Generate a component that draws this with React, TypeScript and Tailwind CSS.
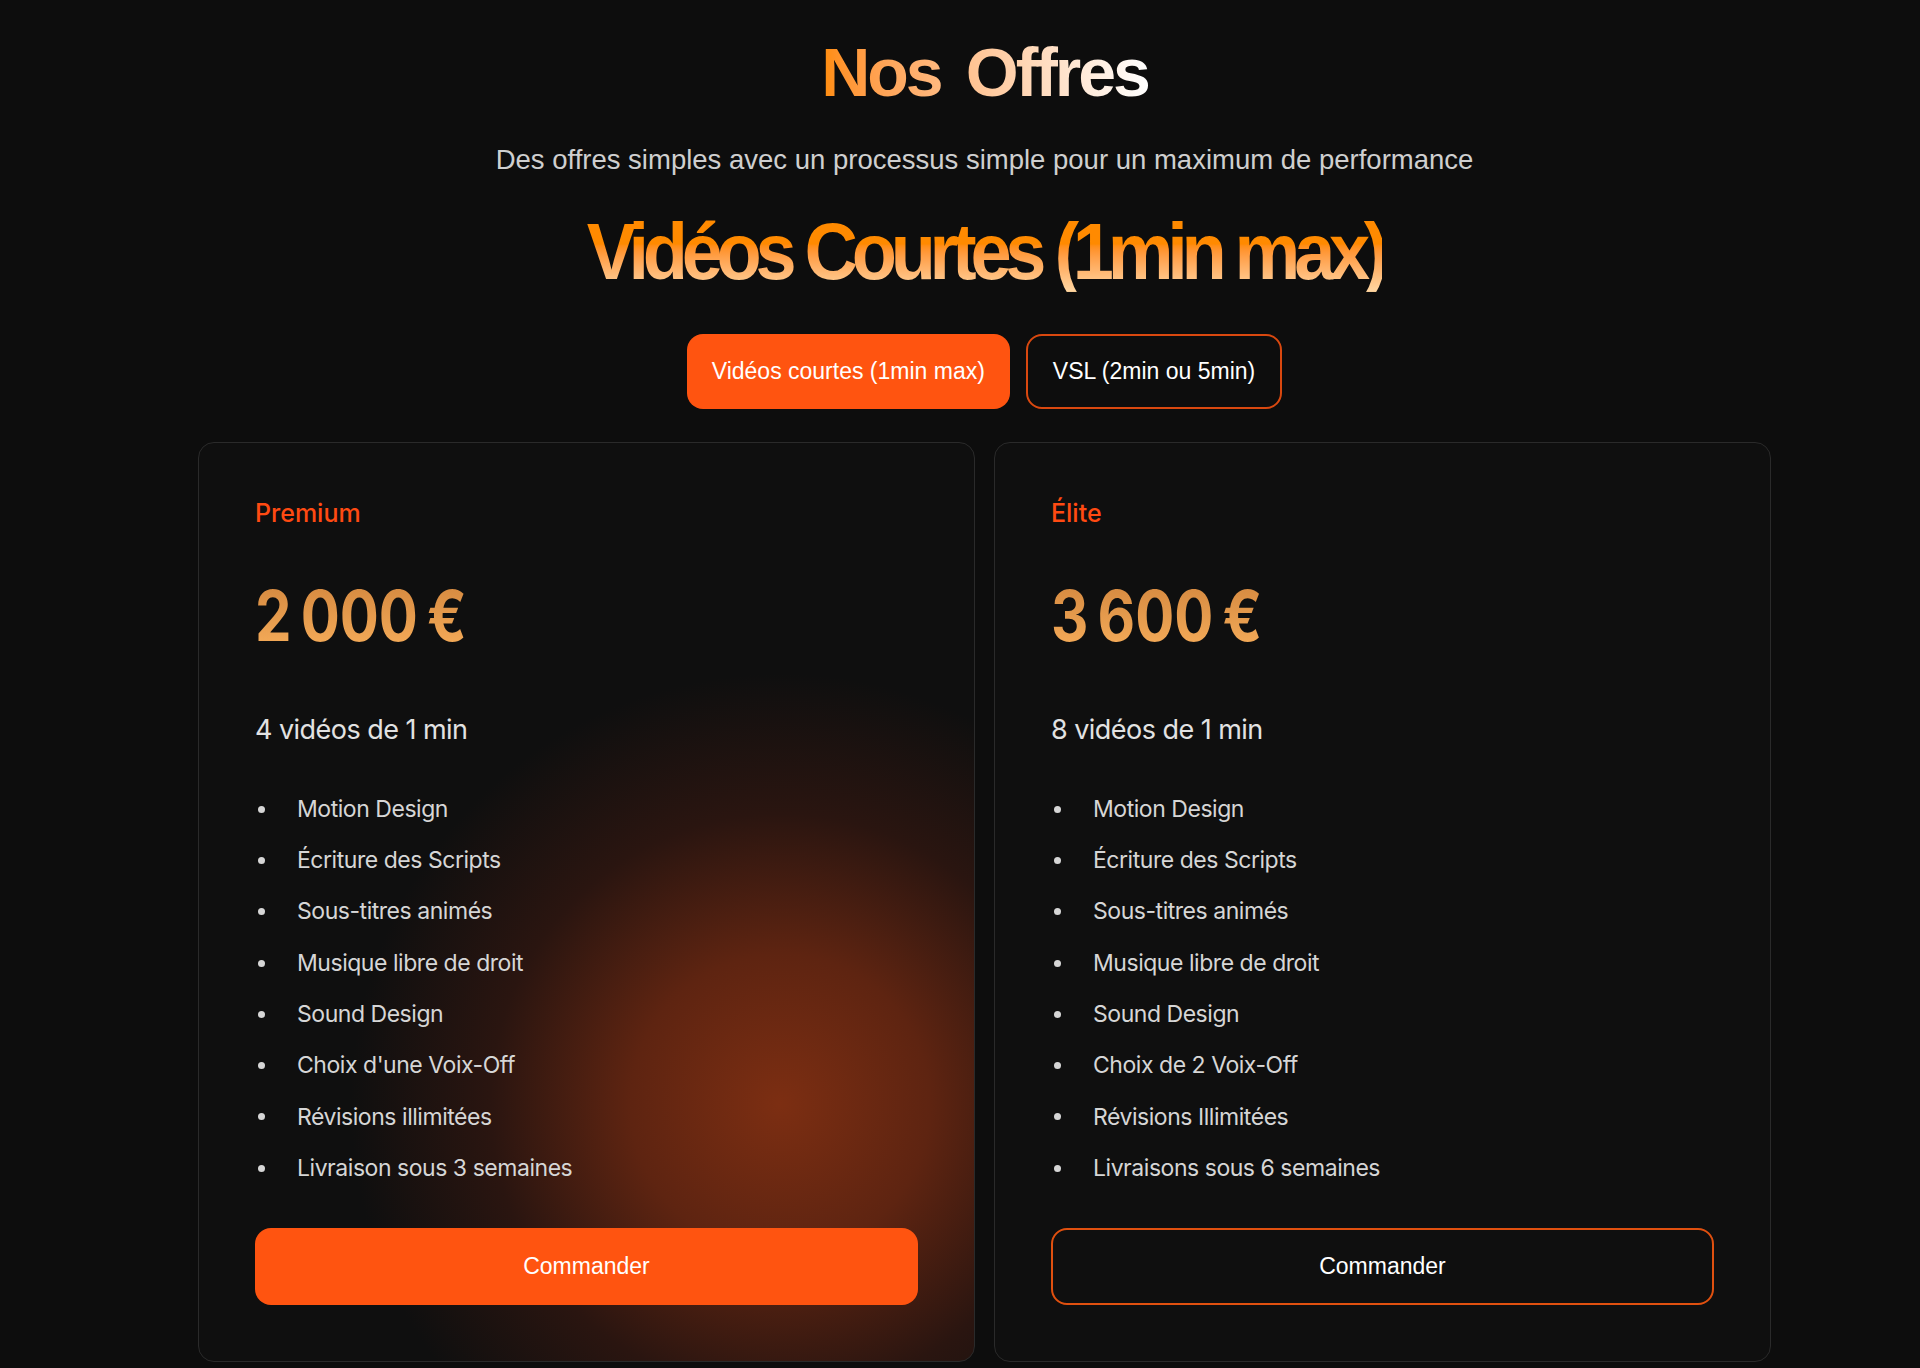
import type { ReactNode } from 'react'

type Offer = {
  id: string
  tier: string
  price: string
  count: string
  features: string[]
  featured: boolean
}

const offers: Offer[] = [
  {
    id: 'premium',
    tier: 'Premium',
    price: '2\u202F000\u202F€',
    count: '4 vidéos de 1 min',
    features: [
      'Motion Design',
      'Écriture des Scripts',
      'Sous-titres animés',
      'Musique libre de droit',
      'Sound Design',
      "Choix d'une Voix-Off",
      'Révisions illimitées',
      'Livraison sous 3 semaines',
    ],
    featured: true,
  },
  {
    id: 'elite',
    tier: 'Élite',
    price: '3\u202F600\u202F€',
    count: '8 vidéos de 1 min',
    features: [
      'Motion Design',
      'Écriture des Scripts',
      'Sous-titres animés',
      'Musique libre de droit',
      'Sound Design',
      'Choix de 2 Voix-Off',
      'Révisions Illimitées',
      'Livraisons sous 6 semaines',
    ],
    featured: false,
  },
]

function Tab({ active, children }: { active?: boolean; children: ReactNode }) {
  return (
    <button
      type="button"
      className={`h-[75px] px-[25px] rounded-[16px] text-[23px] leading-none text-white font-['Liberation_Sans',Arial,sans-serif] ${
        active ? 'bg-[#ff5410]' : 'border-2 border-[#d9480f] bg-transparent'
      }`}
    >
      {children}
    </button>
  )
}

function OfferCard({ offer }: { offer: Offer }) {
  return (
    <div
      className={`flex flex-col rounded-[16px] border border-[#2a2a2a] bg-[#0f0f0f] px-[56px] pt-[58px] pb-[56px] font-['Inter',sans-serif] ${
        offer.featured
          ? 'bg-[radial-gradient(circle_at_75%_72%,#7c2e12_0px,#5e2411_150px,#2a1510_290px,#0f0f0f_430px)]'
          : ''
      }`}
    >
      <p className="text-[25px] leading-none font-medium text-[#ff4a12]">{offer.tier}</p>
      <div className="mt-[57px] h-[66px] flex items-center">
        <p className="text-[58px] leading-none font-bold tracking-[-0.05em] scale-y-[1.2] origin-center bg-gradient-to-b from-[#d4883f] to-[#f6ad5a] bg-clip-text text-transparent">
          {offer.price}
        </p>
      </div>
      <p className="mt-[67px] text-[27px] leading-none tracking-[-0.02em] text-[#e2e2e2]">{offer.count}</p>
      <ul className="mt-[41px]">
        {offer.features.map((f) => (
          <li key={f} className="flex items-center h-[51.3px]">
            <span className="ml-[3px] w-[7px] h-[7px] rounded-full bg-[#d6d6d6]" />
            <span className="ml-[32px] text-[23px] tracking-[-0.02em] text-[#d6d6d6]">{f}</span>
          </li>
        ))}
      </ul>
      <button
        type="button"
        className={`mt-[34px] h-[77px] w-full rounded-[16px] text-[23px] text-white font-['Liberation_Sans',Arial,sans-serif] ${
          offer.featured ? 'bg-[#ff5410]' : 'border-2 border-[#e0500f] bg-transparent'
        }`}
      >
        Commander
      </button>
    </div>
  )
}

export default function App() {
  return (
    <div className="min-h-screen bg-[#0d0d0d] pl-[49px] pt-[38px] pb-[7px] flex flex-col items-center">
      <h1 className="h-[68px] text-[68px] leading-none font-bold tracking-[-0.045em] [word-spacing:0.14em] font-['Liberation_Sans',Arial,sans-serif] bg-gradient-to-r from-[#ff8c00] to-white bg-clip-text text-transparent">
        Nos Offres
      </h1>
      <p className="mt-[40px] text-[27.5px] leading-none text-[#cfcfcf] font-['Liberation_Sans',Arial,sans-serif]">
        Des offres simples avec un processus simple pour un maximum de performance
      </p>
      <h2 className="mt-[41px] h-[74px] text-[74px] leading-none font-bold tracking-[-0.085em] scale-y-[1.08] font-['Liberation_Sans',Arial,sans-serif] bg-gradient-to-b from-[#ff8a00] from-40% to-[#ffd7a3] bg-clip-text text-transparent">
        Vidéos Courtes (1min max)
      </h2>
      <div className="mt-[45px] flex gap-[16px]">
        <Tab active>Vidéos courtes (1min max)</Tab>
        <Tab>VSL (2min ou 5min)</Tab>
      </div>
      <div className="mt-[33px] grid grid-cols-2 gap-[19px] w-[1573px]">
        {offers.map((o) => (
          <OfferCard key={o.id} offer={o} />
        ))}
      </div>
    </div>
  )
}
